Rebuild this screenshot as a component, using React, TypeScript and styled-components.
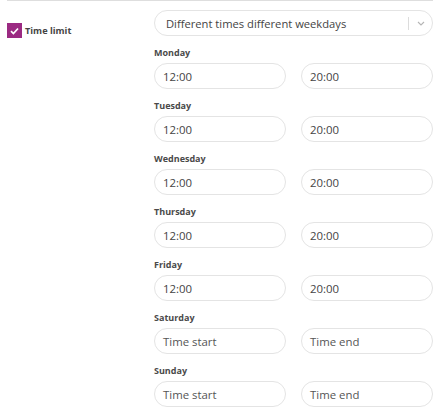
import React from 'react';
import styled, { createGlobalStyle } from 'styled-components';

const GlobalStyle = createGlobalStyle`
  body {
    margin: 0;
    background: #ffffff;
    font-family: "Open Sans", "Liberation Sans", sans-serif;
    color: #444;
  }
`;

const Wrapper = styled.div`
  padding: 0 12px 0 7px;
`;

const Divider = styled.div`
  height: 1px;
  background: #dedede;
  width: 426px;
`;

const Row = styled.div`
  display: grid;
  grid-template-columns: 147px 279px;
  padding-top: 9px;
`;

const CheckLabel = styled.label`
  display: flex;
  align-items: center;
  gap: 3px;
  margin-top: 13px;
  height: 15px;
  font-size: 9.2px;
  font-weight: 700;
  color: #444;
`;

const Box = styled.span`
  width: 15px;
  height: 15px;
  background: #9b2a82;
  display: flex;
  align-items: center;
  justify-content: center;
`;

const Fields = styled.div`
  display: flex;
  flex-direction: column;
`;

const Select = styled.div`
  height: 26px;
  border: 1px solid #e4e4e4;
  border-radius: 14px;
  box-sizing: border-box;
  display: flex;
  align-items: center;
  padding-left: 11px;
  font-size: 11.2px;
  color: #444;
`;

const SelectText = styled.span`
  flex: 1;
`;

const Sep = styled.span`
  width: 1px;
  height: 13px;
  background: #dcdcdc;
`;

const Chevron = styled.span`
  width: 23px;
  display: flex;
  justify-content: center;
`;

const Day = styled.div`
  margin-top: 10px;
`;

const DayLabel = styled.div`
  font-size: 9px;
  font-weight: 700;
  line-height: 13px;
  color: #4a4a4a;
  margin-bottom: 4px;
`;

const Pair = styled.div`
  display: grid;
  grid-template-columns: 132px 132px;
  column-gap: 15px;
`;

const Input = styled.div<{ $placeholder?: boolean }>`
  height: 26px;
  box-sizing: border-box;
  border: 1px solid #e4e4e4;
  border-radius: 14px;
  display: flex;
  align-items: center;
  padding-left: 8px;
  font-size: 11.4px;
  color: ${(p) => (p.$placeholder ? '#555' : '#444')};
`;

const days: { name: string; start?: string; end?: string }[] = [
  { name: 'Monday', start: '12:00', end: '20:00' },
  { name: 'Tuesday', start: '12:00', end: '20:00' },
  { name: 'Wednesday', start: '12:00', end: '20:00' },
  { name: 'Thursday', start: '12:00', end: '20:00' },
  { name: 'Friday', start: '12:00', end: '20:00' },
  { name: 'Saturday' },
  { name: 'Sunday' },
];

export default function App() {
  return (
    <Wrapper>
      <GlobalStyle />
      <Divider />
      <Row>
        <div>
          <CheckLabel>
            <Box>
              <svg width="9" height="8" viewBox="0 0 9 8">
                <path d="M1 4.2 L3.4 6.5 L8 1.5" fill="none" stroke="#fff" strokeWidth="1.7" />
              </svg>
            </Box>
            Time limit
          </CheckLabel>
        </div>
        <Fields>
          <Select>
            <SelectText>Different times different weekdays</SelectText>
            <Sep />
            <Chevron>
              <svg width="8" height="5" viewBox="0 0 8 5">
                <path d="M1 1 L4 4 L7 1" fill="none" stroke="#b5b5b5" strokeWidth="1.1" />
              </svg>
            </Chevron>
          </Select>
          {days.map((d) => (
            <Day key={d.name}>
              <DayLabel>{d.name}</DayLabel>
              <Pair>
                <Input $placeholder={!d.start}>{d.start ?? 'Time start'}</Input>
                <Input $placeholder={!d.end}>{d.end ?? 'Time end'}</Input>
              </Pair>
            </Day>
          ))}
        </Fields>
      </Row>
    </Wrapper>
  );
}
